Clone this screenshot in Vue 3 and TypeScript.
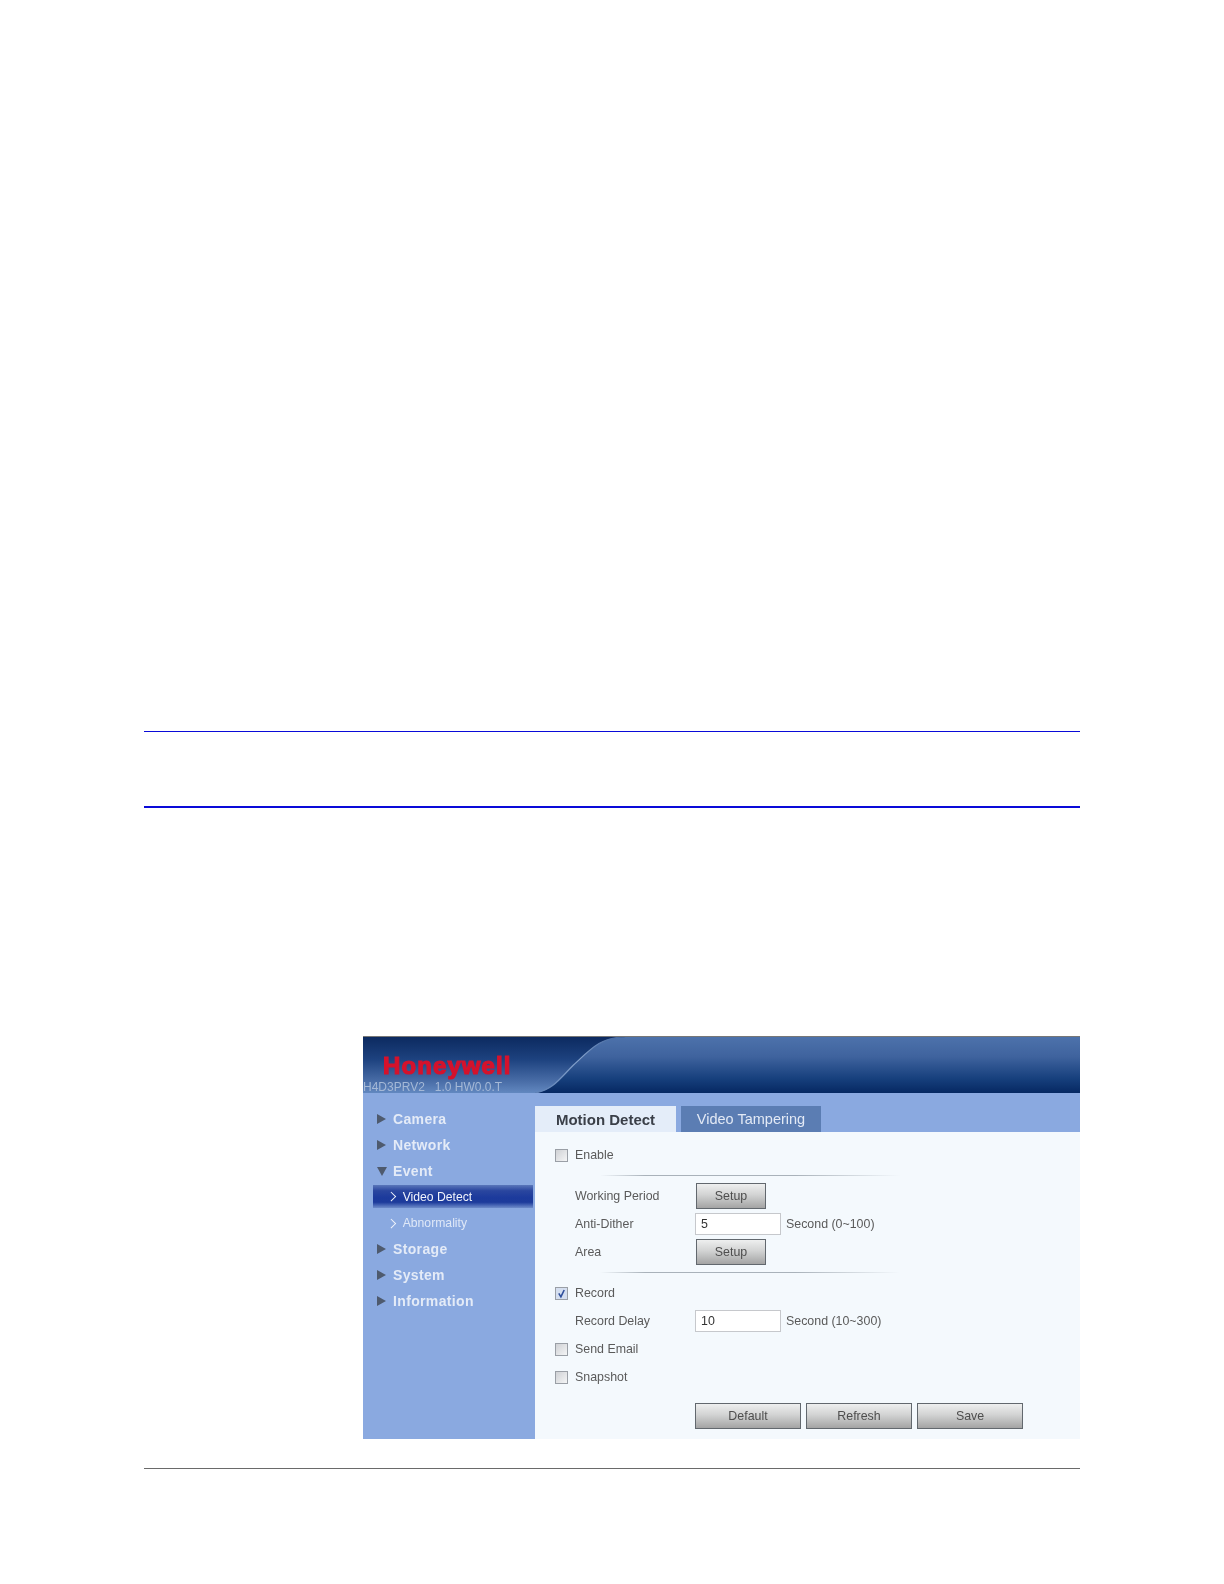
<script setup lang="ts">
const nav1 = ['Camera', 'Network']
const nav2 = ['Storage', 'System', 'Information']
</script>

<template>
  <div class="doc">
    <div class="note">
      <div class="rule-top"></div>
      <div class="rule-bottom"></div>
    </div>
    <section class="shot">
      <header class="banner">
        <svg class="swoosh" viewBox="0 0 717 57" preserveAspectRatio="none" aria-hidden="true">
          <defs>
            <linearGradient id="left" x1="0" y1="0" x2="0" y2="1">
              <stop offset="0" stop-color="#0c2a60" />
              <stop offset="0.4" stop-color="#1d427f" />
              <stop offset="0.8" stop-color="#4a6ea8" />
              <stop offset="1" stop-color="#6288c0" />
            </linearGradient>
            <linearGradient id="edge" x1="0" y1="1" x2="1" y2="0">
              <stop offset="0" stop-color="#5f82b6" />
              <stop offset="0.55" stop-color="#86a3cc" />
              <stop offset="1" stop-color="#3f639c" />
            </linearGradient>
          </defs>
          <path d="M0 0H262C238 0 228 12 210 29C198 41 190 54 172 57H0Z" fill="url(#left)" />
          <path d="M262 0C238 0 228 12 210 29C198 41 190 54 172 57" fill="none" stroke="url(#edge)" stroke-width="1.2" />
        </svg>
        <div class="logo">Honeywell</div>
        <div class="version">H4D3PRV2&nbsp;&nbsp; 1.0 HW0.0.T</div>
      </header>
      <div class="main">
        <nav class="side">
          <div v-for="n in nav1" :key="n" class="nav-item"><i class="tri"></i>{{ n }}</div>
          <div class="nav-item"><i class="tri down"></i>Event</div>
          <div class="sub active"><i class="chev"></i>Video Detect</div>
          <div class="sub"><i class="chev"></i>Abnormality</div>
          <div v-for="n in nav2" :key="n" class="nav-item"><i class="tri"></i>{{ n }}</div>
        </nav>
        <div class="panel">
          <div class="tabs">
            <div class="tab on">Motion Detect</div>
            <div class="tab">Video Tampering</div>
          </div>
          <div class="form">
            <div class="row"><span class="cb"></span><span class="label">Enable</span></div>
            <div class="sep"></div>
            <div class="row in"><span class="label wide">Working Period</span><button class="btn small">Setup</button></div>
            <div class="row in"><span class="label wide">Anti-Dither</span><input class="field" value="5" /><span class="label hint">Second (0~100)</span></div>
            <div class="row in"><span class="label wide">Area</span><button class="btn small">Setup</button></div>
            <div class="sep"></div>
            <div class="row">
              <span class="cb checked">
                <svg viewBox="0 0 11 11" aria-hidden="true"><path d="M2.8 5.4L4.9 8.8L8.2 2" fill="none" stroke="#2f4f9c" stroke-width="1.6" /></svg>
              </span>
              <span class="label">Record</span>
            </div>
            <div class="row in"><span class="label wide">Record Delay</span><input class="field" value="10" /><span class="label hint">Second (10~300)</span></div>
            <div class="row"><span class="cb"></span><span class="label">Send Email</span></div>
            <div class="row"><span class="cb"></span><span class="label">Snapshot</span></div>
            <div class="actions">
              <button class="btn big">Default</button>
              <button class="btn big">Refresh</button>
              <button class="btn big">Save</button>
            </div>
          </div>
        </div>
      </div>
    </section>
    <div class="foot"></div>
  </div>
</template>

<style scoped>
.doc {
  box-sizing: border-box;
  width: 1224px;
  height: 1584px;
  padding: 731px 144px 0 144px;
  background: #fff;
  font-family: "Liberation Sans", Arial, sans-serif;
  overflow: hidden;
}
.rule-top { height: 1px; background: #0a0ad8; }
.rule-bottom { height: 2px; margin-top: 74px; background: #0a0ad8; }
.shot {
  margin: 228px 0 0 219px;
  width: 717px;
  filter: blur(0.4px);
}
.banner {
  position: relative;
  box-sizing: border-box;
  height: 57px;
  border-top: 1px solid #777;
  background: linear-gradient(#4d72ab 0%, #3f639e 35%, #163f7c 75%, #062862 100%);
  overflow: hidden;
}
.swoosh { position: absolute; inset: 0; width: 100%; height: 100%; }
.logo {
  position: absolute;
  left: 20px;
  top: 15px;
  color: #d5122c;
  font-size: 24px;
  line-height: 28px;
  font-weight: 700;
  letter-spacing: 1.1px;
  -webkit-text-stroke: 1.2px #d5122c;
}
.version {
  position: absolute;
  left: 0;
  top: 42px;
  color: #a4b8d6;
  font-size: 12px;
  line-height: 16px;
  white-space: nowrap;
}
.main { display: flex; height: 346px; }
.side {
  box-sizing: border-box;
  width: 172px;
  padding-top: 13px;
  background: #8aa9e0;
}
.nav-item {
  display: flex;
  align-items: center;
  height: 26px;
  padding-left: 14px;
  color: #e4ebf7;
  font-size: 14px;
  font-weight: 700;
  letter-spacing: 0.35px;
}
.tri {
  width: 0;
  height: 0;
  margin-right: 7px;
  border-style: solid;
  border-width: 5.5px 0 5.5px 9px;
  border-color: transparent transparent transparent #4e5a6e;
}
.tri.down {
  border-width: 9px 5.5px 0 5.5px;
  border-color: #4e5a6e transparent transparent transparent;
  margin-right: 6px;
}
.sub {
  display: flex;
  align-items: center;
  height: 26px;
  margin-left: 10px;
  margin-right: 2px;
  padding-left: 15px;
  color: #dfe8f7;
  font-size: 12.2px;
}
.sub.active {
  height: 23px;
  margin-top: 1px;
  margin-bottom: 2px;
  color: #f1f4fb;
  background: linear-gradient(#5a77ba 0%, #2a469f 25%, #1c3a9c 55%, #1d3b9b 75%, #6f8dcb 100%);
}
.chev {
  width: 6.5px;
  height: 6.5px;
  margin-right: 8.2px;
  box-sizing: border-box;
  border-top: 1.5px solid #f2f5fb;
  border-right: 1.5px solid #f2f5fb;
  transform: rotate(45deg);
}
.panel { flex: 1; display: flex; flex-direction: column; background: #f4f9fd; }
.tabs {
  display: flex;
  gap: 5px;
  height: 39px;
  padding-top: 13px;
  box-sizing: border-box;
  background: #8aa9e0;
}
.tab {
  display: flex;
  align-items: center;
  justify-content: center;
  width: 140px;
  color: #e2e9f5;
  background: #5b7db3;
  font-size: 14.5px;
}
.tab.on {
  width: 141px;
  color: #3a3f48;
  background: #e4edf9;
  font-size: 15px;
  font-weight: 700;
}
.form { padding: 9px 0 0 20px; }
.row { display: flex; align-items: center; height: 28px; }
.row.in { padding-left: 20px; }
.cb {
  box-sizing: border-box;
  display: block;
  width: 13px;
  height: 13px;
  margin-right: 7px;
  border: 1px solid #9a9fa6;
  background: linear-gradient(135deg, #cfd1d5, #f4f5f6);
}
.cb svg { display: block; width: 11px; height: 11px; }
.cb.checked { background: #d5dff0; }
.label { color: #5a5a5a; font-size: 12.4px; white-space: nowrap; }
.wide { width: 121px; }
.hint { margin-left: 5px; }
.sep {
  width: 300px;
  height: 1px;
  margin: 6px 0 6px 45px;
  background: linear-gradient(90deg, rgba(160,170,180,0), #a9b2ba 15%, #a9b2ba 65%, rgba(160,170,180,0));
}
.field {
  box-sizing: border-box;
  width: 86px;
  height: 22px;
  margin-left: -1px;
  padding: 0 5px;
  border: 1px solid #c6c8cc;
  border-radius: 0;
  outline: none;
  background: #fff;
  color: #333;
  font-family: inherit;
  font-size: 12.4px;
}
.btn {
  box-sizing: border-box;
  height: 26px;
  padding: 0;
  border: 1px solid #62686e;
  border-radius: 0;
  background: linear-gradient(#eeefef, #d2d3d3 45%, #a4a4a4);
  color: #4e4e4e;
  font-family: inherit;
  font-size: 12.4px;
}
.btn.small { width: 70px; }
.btn.big { width: 106px; }
.actions { display: flex; gap: 5px; margin: 12px 0 0 140px; }
.foot { height: 1px; margin-top: 29px; background: #6a6a6a; }
</style>
